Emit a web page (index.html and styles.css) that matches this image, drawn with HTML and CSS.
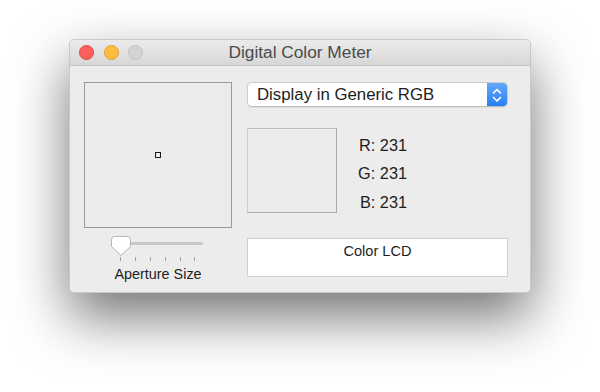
FILE: index.html
```html
<!DOCTYPE html>
<html lang="en">
<head>
    <meta charset="UTF-8">
    <title>Digital Color Meter</title>
    <link rel="stylesheet" href="styles.css">
</head>
<body>

<div class="window">
    <div class="titlebar">
        <div class="lights">
            <span class="light close"></span>
            <span class="light minimize"></span>
            <span class="light zoom"></span>
        </div>
        <div class="title">Digital Color Meter</div>
    </div>

    <div class="content">
        <!-- magnified view + aperture slider -->
        <div class="left">
            <div class="loupe"><span class="aperture"></span></div>
            <svg class="slider" width="100" height="28" viewBox="0 0 100 28">
                <rect x="5" y="8" width="90" height="3" rx="1.5" fill="#c8c8c8"/>
                <g stroke="#a3a3a3" stroke-width="1">
                    <line x1="12.5" y1="23" x2="12.5" y2="27"/>
                    <line x1="27.5" y1="23" x2="27.5" y2="27"/>
                    <line x1="42.5" y1="23" x2="42.5" y2="27"/>
                    <line x1="57.5" y1="23" x2="57.5" y2="27"/>
                    <line x1="72.5" y1="23" x2="72.5" y2="27"/>
                    <line x1="86.5" y1="23" x2="86.5" y2="27"/>
                </g>
                <path d="M3.5 5.5 a3 3 0 0 1 3 -3 h13 a3 3 0 0 1 3 3 v7 L13 21.5 L3.5 12.5 Z" fill="#fff" stroke="#b4b4b4" stroke-width="1"/>
            </svg>
            <div class="slider-label">Aperture Size</div>
        </div>

        <div class="right">
            <div class="popup">
                <span class="popup-text">Display in Generic RGB</span>
                <span class="stepper">
                    <svg width="20" height="23" viewBox="0 0 20 23">
                        <path d="M6.5 10 L10 6.5 L13.5 10" fill="none" stroke="#fff" stroke-width="1.7" stroke-linecap="round" stroke-linejoin="round"/>
                        <path d="M6.5 14.5 L10 18 L13.5 14.5" fill="none" stroke="#fff" stroke-width="1.7" stroke-linecap="round" stroke-linejoin="round"/>
                    </svg>
                </span>
            </div>

            <div class="readout">
                <div class="swatch"></div>
                <div class="values">
                    <div>R: 231</div>
                    <div>G: 231</div>
                    <div>B: 231</div>
                </div>
            </div>

            <div class="display-name">Color LCD</div>
        </div>
    </div>
</div>

</body>
</html>
```

FILE: styles.css
```css
html {
    background-color: white;
}
body {
    box-sizing: border-box;
    min-height: 100vh;
    margin: 0;
    padding: 39px 0 0 69px;
    font-family: "Liberation Sans", Arial, sans-serif;
    color: #1e1e1e;
}
.window {
    box-sizing: border-box;
    width: 462px;
    background-color: #ececec;
    border: 1px solid #c9c9c9;
    border-radius: 5px;
    box-shadow: 0 24px 55px rgba(0,0,0,0.55);
    overflow: hidden;
}
.titlebar {
    display: grid;
    grid-template-columns: 1fr auto 1fr;
    align-items: center;
    height: 25px;
    background: linear-gradient(#ebebeb, #d7d7d7);
    border-bottom: 1px solid #c3c3c3;
}
.lights {
    display: flex;
    gap: 9.5px;
    padding-left: 9px;
}
.light {
    box-sizing: border-box;
    width: 15px;
    height: 15px;
    border-radius: 50%;
}
.close {
    background-color: #fc605c;
    border: 1px solid #e0443f;
}
.minimize {
    background-color: #fdbc40;
    border: 1px solid #dfa033;
}
.zoom {
    background-color: #d3d3d3;
    border: 1px solid #c4c4c4;
}
.title {
    font-size: 17.3px;
    line-height: 25px;
    color: #4b4b4b;
}
.content {
    display: flex;
    gap: 15px;
    padding: 16px 22px 11px 14px;
}
.left {
    width: 148px;
    display: flex;
    flex-direction: column;
    align-items: center;
}
.loupe {
    box-sizing: border-box;
    width: 148px;
    height: 146px;
    border: 1px solid #9a9a9a;
    background-color: #ebebeb;
    display: flex;
    align-items: center;
    justify-content: center;
}
.aperture {
    box-sizing: border-box;
    width: 6px;
    height: 6px;
    border: 1px solid #1a1a1a;
}
.slider {
    display: block;
    margin-top: 6px;
}
.slider-label {
    margin-top: 5px;
    font-size: 14.4px;
    line-height: 14px;
}
.right {
    flex: 1;
    display: flex;
    flex-direction: column;
}
.popup {
    box-sizing: border-box;
    height: 25px;
    display: flex;
    align-items: center;
    background-color: white;
    border: 1px solid #cbcbcb;
    border-bottom-color: #bdbdbd;
    border-radius: 5px;
    box-shadow: 0 1px 1px rgba(0,0,0,0.06);
}
.popup-text {
    flex: 1;
    padding-left: 9px;
    font-size: 16.8px;
}
.stepper {
    width: 20px;
    height: 23px;
    display: flex;
    background: linear-gradient(#64a9fc, #2a7ef6);
    border-radius: 0 4px 4px 0;
}
.readout {
    display: flex;
    height: 85px;
    margin-top: 21px;
}
.swatch {
    box-sizing: border-box;
    width: 90px;
    height: 85px;
    background-color: #ebebeb;
    border: 1px solid;
    border-color: #bdbdbd #a9a9a9 #adadad #cdcdcd;
}
.values {
    width: 70px;
    padding-top: 3px;
    text-align: right;
    font-size: 16.3px;
    line-height: 28.3px;
}
.display-name {
    box-sizing: border-box;
    height: 39px;
    margin-top: 25px;
    padding-top: 3px;
    background-color: white;
    border: 1px solid #d0d0d0;
    text-align: center;
    font-size: 14.6px;
    line-height: 18px;
}
```
